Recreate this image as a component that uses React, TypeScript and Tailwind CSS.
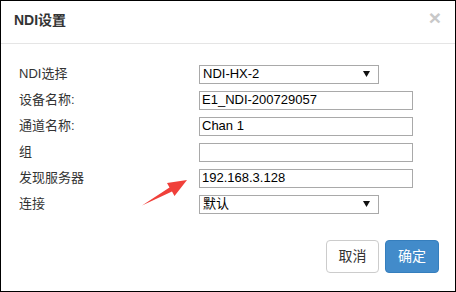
import React from 'react'

const latin = "font-['Liberation_Sans','Noto_Sans_CJK_SC',sans-serif]"

function Field({ label, children }: { label: string; children: React.ReactNode }) {
  return (
    <div className="flex h-[26px] items-center">
      <div className="w-[180px] text-[13px] text-[#333]">{label}</div>
      {children}
    </div>
  )
}

function TextBox({ value }: { value: string }) {
  return (
    <div className="flex h-[19px] w-[214px] items-center border border-[#a9a9a9] bg-white pl-[2px] text-[13px] text-black">
      {value}
    </div>
  )
}

function SelectBox({ value }: { value: string }) {
  return (
    <div className="flex h-[19px] w-[180px] items-center justify-between border border-[#a9a9a9] bg-white pl-[3px] pr-[8px] text-[13px] text-black">
      <span>{value}</span>
      <svg width="7" height="6" viewBox="0 0 7 6">
        <polygon points="0,0 7,0 3.5,6" fill="#111" />
      </svg>
    </div>
  )
}

export default function App() {
  return (
    <div className={`relative flex h-[292px] w-[456px] flex-col border border-black bg-white ${latin}`}>
      <div className="flex h-[43px] items-start justify-between border-b border-[#e5e5e5] pl-[13px] pr-[14px] pt-[11px]">
        <span className="text-[14px] font-bold leading-[16px] text-[#333]">NDI设置</span>
        <span className="-mt-[5px] text-[21px] font-bold leading-[21px] text-[#c8c8c8]">×</span>
      </div>

      <div className="flex flex-col pl-[18px] pt-[17px]">
        <Field label="NDI选择">
          <SelectBox value="NDI-HX-2" />
        </Field>
        <Field label="设备名称:">
          <TextBox value="E1_NDI-200729057" />
        </Field>
        <Field label="通道名称:">
          <TextBox value="Chan 1" />
        </Field>
        <Field label="组">
          <TextBox value="" />
        </Field>
        <Field label="发现服务器">
          <TextBox value="192.168.3.128" />
        </Field>
        <Field label="连接">
          <SelectBox value="默认" />
        </Field>
      </div>

      <div className="mt-[23px] flex justify-end gap-[6px] pr-[16px]">
        <button className="h-[33px] w-[53px] rounded-[4px] border border-[#ccc] bg-white text-[14px] text-[#333]">
          取消
        </button>
        <button className="h-[33px] w-[54px] rounded-[4px] border border-[#357ebd] bg-[#428bca] text-[14px] text-white">
          确定
        </button>
      </div>

      <svg className="pointer-events-none absolute left-0 top-0" width="456" height="292" viewBox="0 0 456 292">
        <polygon
          points="141,204.5 168.5,186.5 166,182 186,179 173.5,195 171,190.5"
          fill="#f0403a"
        />
      </svg>
    </div>
  )
}
